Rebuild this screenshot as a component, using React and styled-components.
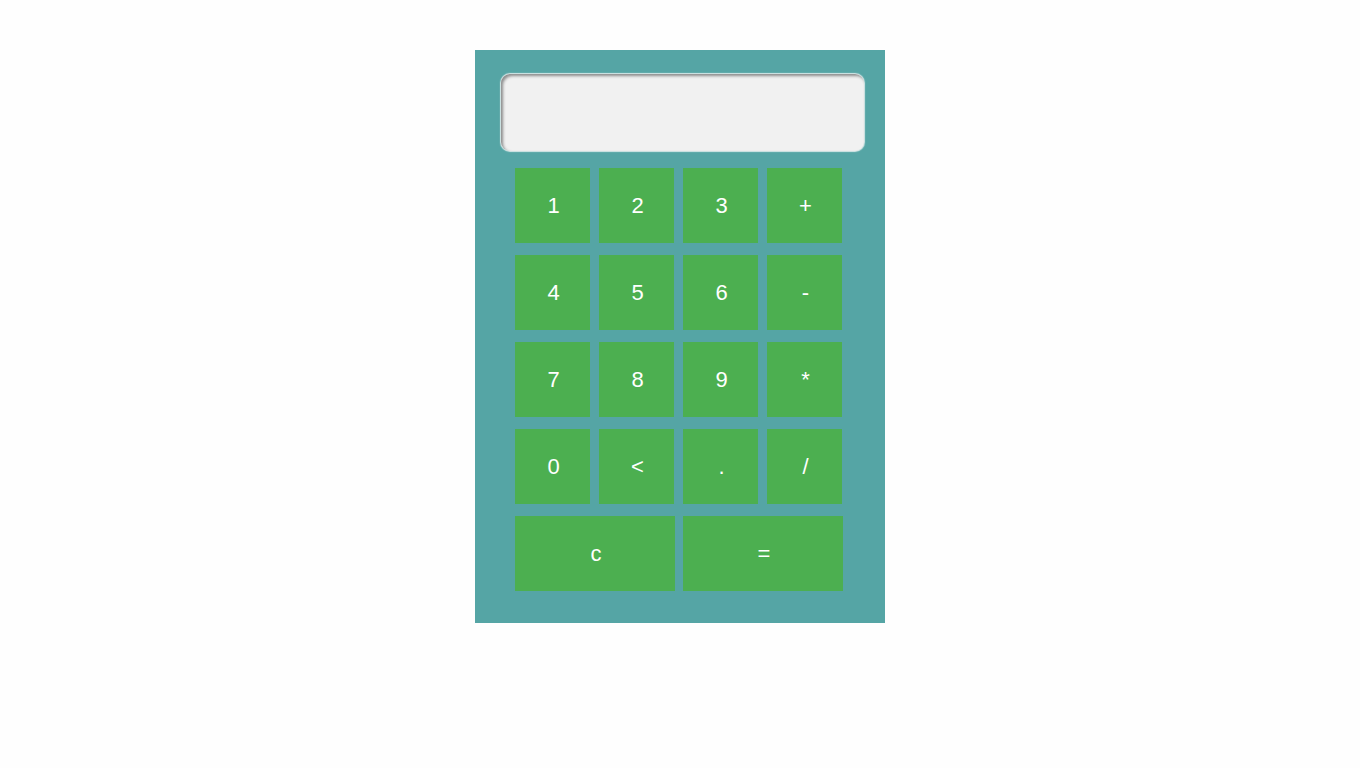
import React from 'react';
import styled, { createGlobalStyle } from 'styled-components';

const GlobalStyle = createGlobalStyle`
  body {
    margin: 0;
    background: #fefefe;
    font-family: 'Liberation Sans', Arial, sans-serif;
  }
`;

const Page = styled.div`
  display: flex;
  justify-content: flex-start;
  padding: 50px 0 0 475px;
`;

const Calculator = styled.div`
  width: 410px;
  box-sizing: border-box;
  background-color: #55a5a5;
  padding: 24px 0 32px 0;
`;

const Display = styled.input`
  display: block;
  box-sizing: border-box;
  width: 363px;
  height: 77px;
  margin: 0 0 17px 26px;
  border: none;
  border-radius: 9px;
  background: #f1f1f1;
  box-shadow: inset 2px 2px 3px #8c8c8c, 0 0 1px 1px #d8e8e8;
  outline: none;
`;

const Keys = styled.div`
  display: grid;
  grid-template-columns: repeat(4, 75px);
  grid-auto-rows: 75px;
  column-gap: 9px;
  row-gap: 12px;
  padding-left: 40px;
`;

const Key = styled.button`
  grid-column: span ${(p) => p.$span || 1};
  width: ${(p) => (p.$span === 2 ? '160px' : '75px')};
  justify-self: start;
  border: none;
  background-color: #4caf50;
  color: #ffffff;
  font-family: 'Liberation Sans', Arial, sans-serif;
  font-size: 22px;
  cursor: pointer;
  padding: 0 0 0 2px;
`;

const keys = ['1', '2', '3', '+', '4', '5', '6', '-', '7', '8', '9', '*', '0', '<', '.', '/'];

const App = () => {
  return (
    <Page>
      <GlobalStyle />
      <Calculator>
        <Display type="text" readOnly />
        <Keys>
          {keys.map((k) => (
            <Key key={k}>{k}</Key>
          ))}
          <Key $span={2}>c</Key>
          <Key $span={2}>=</Key>
        </Keys>
      </Calculator>
    </Page>
  );
};

export default App;
